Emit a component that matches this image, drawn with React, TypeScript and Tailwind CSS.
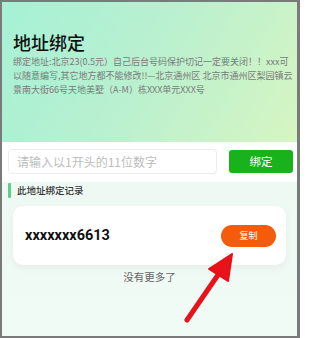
import React from "react";

export default function App() {
  const font = { fontFamily: '"Noto Sans CJK SC", "Noto Sans", sans-serif' };
  return (
    <div className="w-[300px] h-[338px] bg-[#7a7a7a] p-[2px] pr-[3px] overflow-hidden" style={font}>
      <div className="relative w-full h-full bg-[#f0faf6] flex flex-col overflow-hidden">
        {/* header */}
        <div className="h-[140px] bg-[linear-gradient(120deg,#a6f1d6_0%,#b8f0d0_45%,#d6f5c2_100%)] pt-[27px] pl-[11px] pr-[4px]">
          <div className="text-[18px] leading-[26px] font-medium text-[#111]">地址绑定</div>
          <div className="text-[9px] leading-[14px] text-[#7a7a7a]">
            <div className="whitespace-nowrap">绑定地址:北京23(0.5元）自己后台号码保护切记一定要关闭！！xxx可</div>
            <div className="whitespace-nowrap">以随意编写,其它地方都不能修改!!—北京通州区 北京市通州区梨园镇云</div>
            <div className="whitespace-nowrap">景南大街66号天地美墅（A-M）栋XXX单元XXX号</div>
          </div>
        </div>
        {/* input row */}
        <div className="bg-white pt-[7px] pb-[8px] pl-[6px] pr-[4px] flex items-center gap-[12px]">
          <div className="w-[209px] h-[25px] border border-[#ececec] rounded-[4px] flex items-center pl-[8px] text-[12px] text-[#bdbdbd]">
            请输入以1开头的11位数字
          </div>
          <div className="w-[64px] h-[23px] bg-[#19b11c] rounded-[3px] flex items-center justify-center text-white text-[11.5px]">
            绑定
          </div>
        </div>
        {/* records */}
        <div className="flex-1 bg-[linear-gradient(180deg,#eef9f3,#f1fbf6)]">
          <div className="mt-[1px] flex items-center pl-[6px] h-[15px]">
            <div className="w-[3px] h-[15px] bg-[#5dcf86] rounded-[1px]" />
            <div className="ml-[6px] text-[9.5px] font-medium text-[#333]">此地址绑定记录</div>
          </div>
          <div className="mx-[11px] mt-[8px] h-[59px] bg-white rounded-[10px] shadow-[0_3px_8px_rgba(0,0,0,0.05)] flex items-center justify-between pl-[12px] pr-[10px]">
            <div className="text-[14.5px] font-bold text-[#111]" style={{ fontFamily: 'Roboto, sans-serif' }}>
              xxxxxxx6613
            </div>
            <div className="w-[55px] h-[22px] bg-[#f45b0b] rounded-full flex items-center justify-center text-white text-[9px]">
              复制
            </div>
          </div>
          <div className="mt-[4px] text-center text-[10.5px] text-[#666]">没有更多了</div>
        </div>
        {/* arrow */}
        <svg className="absolute left-0 top-0" width="298" height="336" viewBox="0 0 298 336">
          <line x1="185" y1="318" x2="218" y2="270" stroke="#e8121a" strokeWidth="5" strokeLinecap="round" />
          <polygon points="230,252 207,267 226,279" fill="#e8121a" stroke="#e8121a" strokeWidth="2" strokeLinejoin="round" />
        </svg>
      </div>
    </div>
  );
}
